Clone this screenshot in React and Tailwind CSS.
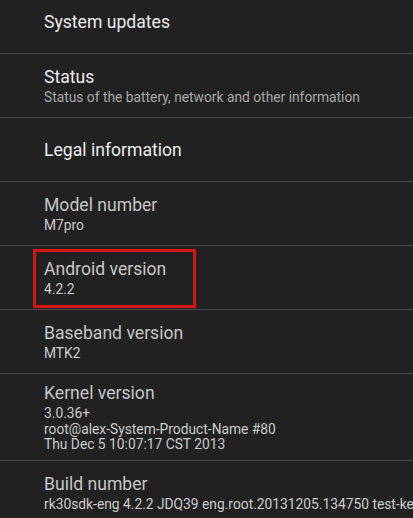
const Divider = () => <div className="h-px bg-[#4b4b4b]" />;

const Row = ({ title, summary, bright, className = "", children }) => (
  <div className={`relative pl-[44px] ${className}`}>
    <div
      className={`text-[17.6px] leading-[24px] whitespace-nowrap ${
        bright ? "text-[#ececec]" : "text-[#c6c6c6]"
      }`}
    >
      {title}
    </div>
    {summary && (
      <div
        className={`mt-[1px] text-[13.8px] leading-[15.6px] whitespace-nowrap ${
          bright ? "text-[#a8a8a8]" : "text-[#cccccc]"
        }`}
      >
        {summary}
      </div>
    )}
    {children}
  </div>
);

export default function App() {
  return (
    <div
      className="w-[413px] h-[518px] overflow-hidden bg-[#212121]"
      style={{ fontFamily: "Roboto, 'Noto Sans', sans-serif" }}
    >
      {/* list scrolled a little, first row is cut at the top */}
      <Row title="System updates" bright className="h-[53px] pt-[10px]" />
      <Divider />

      <Row
        title="Status"
        summary="Status of the battery, network and other information"
        bright
        className="h-[63px] pt-[11px]"
      />
      <Divider />

      <div className="h-[63px] flex items-center">
        <Row title="Legal information" bright />
      </div>
      <Divider />

      <Row title="Model number" summary="M7pro" className="h-[63px] pt-[11px]" />
      <Divider />

      <Row title="Android version" summary="4.2.2" className="h-[63px] pt-[11px]">
        {/* red highlight box */}
        <div className="absolute left-[33px] top-[3px] w-[163px] h-[59px] border-[3px] border-[#da1414]" />
      </Row>
      <Divider />

      <Row title="Baseband version" summary="MTK2" className="h-[63px] pt-[11px]" />
      <Divider />

      <Row
        title="Kernel version"
        summary={
          <>
            3.0.36+
            <br />
            root@alex-System-Product-Name #80
            <br />
            Thu Dec 5 10:07:17 CST 2013
          </>
        }
        className="h-[86px] pt-[7px]"
      />
      <Divider />

      <Row
        title="Build number"
        summary="rk30sdk-eng 4.2.2 JDQ39 eng.root.20131205.134750 test-keys"
        className="pt-[11px]"
      />
    </div>
  );
}
